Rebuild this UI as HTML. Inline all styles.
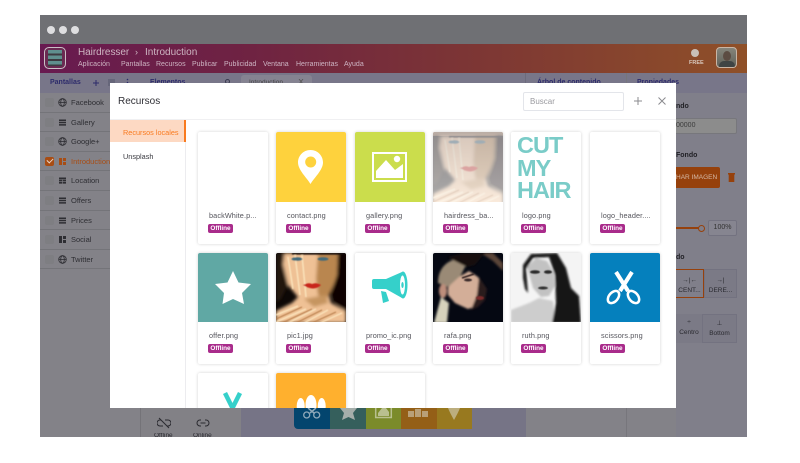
<!DOCTYPE html>
<html><head><meta charset="utf-8"><style>
*{box-sizing:border-box}
html,body{margin:0;padding:0;width:800px;height:463px;overflow:hidden;background:#fff;font-family:"Liberation Sans",sans-serif}
.a{position:absolute}
.row{position:absolute;left:40px;width:71px;height:19.55px;border-bottom:1px solid #747479;font-size:7.5px;color:#2e2e33;line-height:19.5px;white-space:nowrap;overflow:hidden}
.row .cb{position:absolute;left:5px;top:5px;width:9px;height:9px;background:#7e7e82;border-radius:2px}
.row svg{position:absolute;left:18px;top:5px}
.row span{position:absolute;left:31px;top:0}
.card{position:absolute;width:70px;height:112px;background:#fff;border-radius:2px;box-shadow:0 0 3px rgba(0,0,0,.18)}
.img{position:absolute;left:0;top:0;width:70px;height:70px;overflow:hidden;border-radius:2px 2px 0 0}
.img svg{display:block}
.nm{position:absolute;left:11px;top:79px;font-size:7.3px;color:#55555c;white-space:nowrap;letter-spacing:.1px}
.bd{position:absolute;left:10px;top:92px;width:25px;height:9px;background:#a92b8b;color:#fff;font-size:6.4px;font-weight:bold;border-radius:2px;text-align:center;line-height:9px}
.tb{font-size:7px;color:#2d2b6b;font-weight:bold;position:absolute;top:78.5px;white-space:nowrap}
.menu{position:absolute;top:60.5px;font-size:7px;color:#cdb3c2;white-space:nowrap}
</style></head><body>
<svg width="0" height="0" style="position:absolute"><defs>
<filter id="b1"><feGaussianBlur stdDeviation="1.1"/></filter>
<filter id="b3"><feGaussianBlur stdDeviation="1.600"/></filter>
<filter id="b2"><feGaussianBlur stdDeviation=".6"/></filter>
<g id="pic">
<rect width="70" height="70" fill="#0d0806"/>
<g filter="url(#b3)">
<path d="M0 70V58L16 50 22 44 12 32 7 12 8 0H62L61 24 53 42 55 50 70 58V70Z" fill="#efc195"/>
<path d="M42 0H62L61 24 53 42 50 47 42 42 40 26Z" fill="#b98650"/>
<path d="M28 46L50 42 52 50 38 54Z" fill="#c69560"/>
<path d="M7 0V14L12 32 5 46 0 50V0Z" fill="#24140d"/>
<path d="M62 0H70V58L59 50 55 40 61 22Z" fill="#080504"/>
</g>
<g filter="url(#b2)">
<path d="M0 62L22 53M0 69L30 56M12 70L40 56M28 70L52 57M44 70L66 60M12 4L17 36M19 2L24 42M26 2L30 44" stroke="#fae2ba" stroke-width="1.500" fill="none"/>
<path d="M0 66L26 54M6 70L36 56M20 70L46 57M36 70L60 59" stroke="#b67c48" stroke-width="1" fill="none"/>
<path d="M16 0H70V1.500H16Z" fill="#150c08"/>
<ellipse cx="21" cy="6" rx="5.500" ry="1.800" fill="#3f6a7b"/>
<ellipse cx="47" cy="6" rx="5.500" ry="1.800" fill="#426a7a"/>
<path d="M27 32Q33 29 36 31 40 29 45 32 38 39 27 32Z" fill="#c8261f"/>
</g></g>
</defs></svg>

<!-- app window -->
<div class="a" style="left:40px;top:15px;width:707px;height:422px;background:#838288;overflow:hidden"></div>
<div class="a" style="left:40px;top:15px;width:707px;height:29px;background:#6f7074"></div>
<div class="a" style="left:47px;top:26px;width:8px;height:8px;border-radius:50%;background:#dedee0"></div>
<div class="a" style="left:59px;top:26px;width:8px;height:8px;border-radius:50%;background:#dedee0"></div>
<div class="a" style="left:71px;top:26px;width:8px;height:8px;border-radius:50%;background:#dedee0"></div>
<div class="a" style="left:40px;top:44px;width:707px;height:29px;background:linear-gradient(90deg,#681a50 0%,#6f2342 30%,#7c3535 60%,#8f5028 100%)"></div>
<div class="a" style="left:44px;top:47px;width:22px;height:22px;border:1px solid #c9c0c6;border-radius:5px;background:#6a2a52"></div>
<div class="a" style="left:48px;top:50px;width:14px;height:16px;background:repeating-linear-gradient(180deg,#5f8f8e 0,#5f8f8e 3.500px,#3c3a40 3.500px,#3c3a40 5.500px)"></div>
<div class="a" style="left:78px;top:47px;font-size:10px;color:#cdb5c2;white-space:nowrap;letter-spacing:-.05px">Hairdresser</div>
<div class="a" style="left:135px;top:47px;font-size:9px;color:#cdb5c2">›</div>
<div class="a" style="left:145px;top:47px;font-size:10px;color:#cdb5c2;white-space:nowrap">Introduction</div>
<div class="menu" style="left:78px">Aplicación</div>
<div class="menu" style="left:121px">Pantallas</div>
<div class="menu" style="left:156px">Recursos</div>
<div class="menu" style="left:192px">Publicar</div>
<div class="menu" style="left:224px">Publicidad</div>
<div class="menu" style="left:263px">Ventana</div>
<div class="menu" style="left:296px">Herramientas</div>
<div class="menu" style="left:344px">Ayuda</div>
<div class="a" style="left:691px;top:49px;width:8px;height:8px;border-radius:50%;background:#c9c0b8"></div>
<div class="a" style="left:689px;top:60px;font-size:5.500px;color:#d8c8bc;font-weight:bold">FREE</div>
<div class="a" style="left:716px;top:47px;width:21px;height:21px;border:1px solid #c9b5a5;border-radius:4px;background:linear-gradient(180deg,#85847a,#60625a);overflow:hidden"><div style="position:absolute;left:6px;top:3px;width:8px;height:10px;border-radius:50%;background:#5c4c42"></div><div style="position:absolute;left:2px;top:13px;width:16px;height:8px;border-radius:5px 5px 0 0;background:#3f4444"></div></div>

<!-- toolbar -->
<div class="a" style="left:40px;top:73px;width:707px;height:20px;background:#787689"></div>
<div class="tb" style="left:50px">Pantallas</div>
<svg class="a" style="left:92px;top:79px" width="8" height="8" viewBox="0 0 8 8" stroke="#2d2b6b" stroke-width="1"><path d="M4 1V7M1 4H7"/></svg>
<div class="a" style="left:108px;top:79px;width:7px;height:7px;background:#66667a"></div>
<svg class="a" style="left:126px;top:78px" width="3" height="9" viewBox="0 0 3 9" fill="#2d2b6b"><circle cx="1.500" cy="1.500" r=".8"/><circle cx="1.500" cy="4.500" r=".8"/><circle cx="1.500" cy="7.500" r=".8"/></svg>
<div class="tb" style="left:150px">Elementos</div>
<div class="a" style="left:225px;top:79px;width:5px;height:5px;border:1px solid #3a3a50;border-radius:50%"></div>
<div class="a" style="left:241px;top:75px;width:71px;height:18px;background:#858391;border-radius:3px 3px 0 0"></div>
<div class="a" style="left:249px;top:79px;font-size:6.500px;color:#444">Introduction</div>
<svg class="a" style="left:298px;top:79px" width="6" height="5" viewBox="0 0 6 5" stroke="#555" stroke-width=".8"><path d="M1 0L5 5M5 0L1 5"/></svg>
<div class="tb" style="left:537px">Árbol de contenido</div>
<div class="tb" style="left:637px">Propiedades</div>
<div class="a" style="left:525px;top:73px;width:1px;height:20px;background:#6d6b7c"></div>
<div class="a" style="left:626px;top:73px;width:1px;height:364px;background:#77767c"></div>

<!-- sidebar -->
<div class="row" style="top:93.200px"><div class="cb"></div><svg width="9" height="9" viewBox="0 0 9 9" fill="none" stroke="#2e2e33" stroke-width=".8"><circle cx="4.500" cy="4.500" r="3.800"/><ellipse cx="4.500" cy="4.500" rx="1.800" ry="3.800"/><path d="M.7 4.500H8.300"/></svg><span>Facebook</span></div>
<div class="row" style="top:112.800px"><div class="cb"></div><svg width="9" height="9" viewBox="0 0 9 9" fill="#2e2e33"><path d="M1 1.500H8V3H1ZM1 3.800H8V5.300H1ZM1 6.100H8V7.600H1Z"/></svg><span>Gallery</span></div>
<div class="row" style="top:132.300px"><div class="cb"></div><svg width="9" height="9" viewBox="0 0 9 9" fill="none" stroke="#2e2e33" stroke-width=".8"><circle cx="4.500" cy="4.500" r="3.800"/><ellipse cx="4.500" cy="4.500" rx="1.800" ry="3.800"/><path d="M.7 4.500H8.300"/></svg><span>Google+</span></div>
<div class="row" style="top:151.900px;color:#a84d14"><div class="cb" style="background:#a84d14"></div><svg width="9" height="9" viewBox="0 0 9 9" fill="#a84d14"><path d="M1 1H4V8H1ZM5 1H8V4H5ZM5 5H8V8H5Z"/></svg><span>Introduction</span></div>
<div class="a" style="left:46.500px;top:158px;width:6px;height:4px;border-left:1px solid #e8d5c8;border-bottom:1px solid #e8d5c8;transform:rotate(-45deg)"></div>
<div class="row" style="top:171.400px"><div class="cb"></div><svg width="9" height="9" viewBox="0 0 9 9" fill="#2e2e33"><path d="M1 1.500H8V3.200H1ZM1 3.800H4.200V5.300H1ZM4.800 3.800H8V5.300H4.800ZM1 5.900H4.200V7.600H1ZM4.800 5.900H8V7.600H4.800Z"/></svg><span>Location</span></div>
<div class="row" style="top:191px"><div class="cb"></div><svg width="9" height="9" viewBox="0 0 9 9" fill="#2e2e33"><path d="M1 1.500H8V3H1ZM1 3.800H8V5.300H1ZM1 6.100H8V7.600H1Z"/></svg><span>Offers</span></div>
<div class="row" style="top:210.500px"><div class="cb"></div><svg width="9" height="9" viewBox="0 0 9 9" fill="#2e2e33"><path d="M1 1.500H8V3H1ZM1 3.800H8V5.300H1ZM1 6.100H8V7.600H1Z"/></svg><span>Prices</span></div>
<div class="row" style="top:230.100px"><div class="cb"></div><svg width="9" height="9" viewBox="0 0 9 9" fill="#2e2e33"><path d="M1 1H4V8H1ZM5 1H8V4H5ZM5 5H8V8H5Z"/></svg><span>Social</span></div>
<div class="row" style="top:249.600px"><div class="cb"></div><svg width="9" height="9" viewBox="0 0 9 9" fill="none" stroke="#2e2e33" stroke-width=".8"><circle cx="4.500" cy="4.500" r="3.800"/><ellipse cx="4.500" cy="4.500" rx="1.800" ry="3.800"/><path d="M.7 4.500H8.300"/></svg><span>Twitter</span></div>

<!-- bottom bits -->
<div class="a" style="left:140px;top:408px;width:101px;height:29px;background:#828186;border-left:1px solid #747378"></div>
<div class="a" style="left:241px;top:408px;width:285px;height:29px;background:#767486"></div>
<svg class="a" style="left:157px;top:417px" width="14" height="12" viewBox="0 0 14 12" fill="none" stroke="#2a2a30" stroke-width="1"><path d="M4 3H3A3 3 0 0 0 3 9H6M8 3H11A3 3 0 0 1 11 9H10M2 1L12 11"/></svg>
<svg class="a" style="left:196px;top:417px" width="14" height="12" viewBox="0 0 14 12" fill="none" stroke="#2a2a30" stroke-width="1"><path d="M5 3H4A3 3 0 0 0 4 9H5M9 3H10A3 3 0 0 1 10 9H9M4.500 6H9.500"/></svg>
<div class="a" style="left:154px;top:433px;font-size:6.500px;color:#2a2a30;height:4px;overflow:hidden;line-height:6px">Offline</div>
<div class="a" style="left:193px;top:433px;font-size:6.500px;color:#2a2a30;height:4px;overflow:hidden;line-height:6px">Online</div>
<div class="a" style="left:294px;top:408px;width:36px;height:20.500px;background:#03456e;border-radius:0 0 0 4px"></div>
<div class="a" style="left:330px;top:408px;width:36px;height:20.500px;background:#355f5c"></div>
<div class="a" style="left:366px;top:408px;width:35px;height:20.500px;background:#7b8b2a"></div>
<div class="a" style="left:401px;top:408px;width:36px;height:20.500px;background:#945f17"></div>
<div class="a" style="left:437px;top:408px;width:35px;height:20.500px;background:#98791f"></div>
<svg class="a" style="left:294px;top:408px" width="178" height="21" viewBox="0 0 178 21"><path d="M14 0L20 5M22 0L16 5" stroke="#8fa9ba" stroke-width="1.500" fill="none"/><circle cx="12.700" cy="7" r="3" fill="none" stroke="#8fa9ba" stroke-width="1.300"/><circle cx="22.700" cy="7" r="3" fill="none" stroke="#8fa9ba" stroke-width="1.300"/><path d="M46 0H63L59 5 61 12 54.500 9 48 12 50 5Z" fill="#a5aeaa"/><path d="M81.700 0V9.500H97.300V0" fill="none" stroke="#b9c08f" stroke-width="1.500"/><path d="M84 8V5L88 0H92L95 4V8Z" fill="#b9c08f"/><path d="M114 9V3H120V9ZM121 9V1H127V9ZM128 9V3H134V9Z" fill="#b9a078"/><path d="M154 0H166Q164 5 160 12 156 5 154 0Z" fill="#bcae7e"/></svg>

<!-- right panel (dimmed) -->
<div class="a" style="left:676px;top:93px;width:71px;height:344px;background:#807f8a"></div>
<div class="a" style="left:676px;top:103px;font-size:7px;font-weight:bold;color:#1f1f24">ndo</div>
<div class="a" style="left:676px;top:118px;width:61px;height:16px;background:#8c8c8c;border:1px solid #77777c;border-left:0;border-radius:0 2px 2px 0;font-size:7px;color:#3c3c3c;line-height:14px">00000</div>
<div class="a" style="left:676px;top:152px;font-size:7px;font-weight:bold;color:#1f1f24">Fondo</div>
<div class="a" style="left:676px;top:167px;width:44px;height:21px;background:#96410c;border-radius:0 2px 2px 0;color:#d5b9a6;font-size:6.500px;line-height:21px;white-space:nowrap;overflow:hidden">HAR IMAGEN</div>
<svg class="a" style="left:728px;top:173px" width="7" height="9" viewBox="0 0 7 9" fill="#96410c"><path d="M0 0H7V1.500H6.300V9H.7V1.500H0Z"/></svg>
<div class="a" style="left:676px;top:227px;width:25px;height:2px;background:#96410c"></div>
<div class="a" style="left:698px;top:225px;width:7px;height:7px;border:1px solid #96410c;border-radius:50%;background:#807f8a"></div>
<div class="a" style="left:708px;top:220px;width:29px;height:16px;background:#868590;border:1px solid #737280;border-radius:2px;font-size:7px;color:#333;text-align:center;line-height:14px">100%</div>
<div class="a" style="left:676px;top:254px;font-size:7px;font-weight:bold;color:#1f1f24">do</div>
<div class="a" style="left:676px;top:269px;width:28px;height:29px;border:1px solid #96410c;border-left:0;font-size:6.500px;color:#2a2a30;text-align:center;line-height:10px;padding-top:6px;white-space:nowrap;overflow:hidden">→|←<br>CENT...</div>
<div class="a" style="left:704px;top:269px;width:33px;height:29px;background:#7b7a86;border:1px solid #737280;font-size:6.500px;color:#2a2a30;text-align:center;line-height:10px;padding-top:6px">→|<br>DERE...</div>
<div class="a" style="left:676px;top:314px;width:26px;height:29px;background:#7b7a86;font-size:6.500px;color:#2a2a30;text-align:center;line-height:10px;padding-top:4px">÷<br>Centro</div>
<div class="a" style="left:702px;top:314px;width:35px;height:29px;background:#7b7a86;border:1px solid #737280;font-size:6.500px;color:#2a2a30;text-align:center;line-height:10px;padding-top:4px">⊥<br>Bottom</div>

<!-- modal -->
<div class="a" style="left:110px;top:83px;width:566px;height:325px;background:#fff;overflow:hidden">
 <div class="a" style="left:8px;top:12.500px;font-size:10px;line-height:12px;color:#303036">Recursos</div>
 <div class="a" style="left:413px;top:9px;width:101px;height:19px;border:1px solid #e3e5ea;border-radius:2px;font-size:8px;color:#9a9a9f;line-height:17px;padding-left:6px">Buscar</div>
 <svg class="a" style="left:523px;top:13px" width="10" height="10" viewBox="0 0 10 10" stroke="#8b8b8f" stroke-width="1"><path d="M5 1V9M1 5H9"/></svg>
 <svg class="a" style="left:547px;top:13px" width="10" height="10" viewBox="0 0 10 10" stroke="#8b8b8f" stroke-width="1"><path d="M1.500 1.500L8.500 8.500M8.500 1.500L1.500 8.500"/></svg>
 <div class="a" style="left:0;top:36px;width:566px;height:1px;background:#f0f0f2"></div>
 <div class="a" style="left:75px;top:37px;width:1px;height:288px;background:#ececef"></div>
 <div class="a" style="left:0;top:37px;width:76px;height:22px;background:#fdd9c3;border-right:2px solid #f97a1f"></div>
 <div class="a" style="left:13px;top:45px;font-size:7.300px;color:#f97a1f;white-space:nowrap">Recursos locales</div>
 <div class="a" style="left:13px;top:69px;font-size:7.300px;color:#3a3a40">Unsplash</div>

 <div class="card" style="left:88px;top:49px"><div class="nm">backWhite.p...</div><div class="bd">Offline</div></div>

 <div class="card" style="left:166px;top:49px"><div class="img" style="background:#fed23d"><svg width="70" height="70" viewBox="0 0 70 70"><path fill-rule="evenodd" d="M34.500 18C27 18 22 24 22 30.500 22 38 31 46 34.500 52 38 46 47 38 47 30.500 47 24 42 18 34.500 18ZM34.700 24.500A5.500 5.500 0 1 1 34.700 35.500 5.500 5.500 0 0 1 34.700 24.500Z" fill="#fff"/></svg></div><div class="nm">contact.png</div><div class="bd">Offline</div></div>

 <div class="card" style="left:245px;top:49px"><div class="img" style="background:#cbdd4c"><svg width="70" height="70" viewBox="0 0 70 70"><rect x="18" y="21" width="33" height="28" fill="none" stroke="#fff" stroke-width="2"/><circle cx="42" cy="27" r="3.200" fill="#fff"/><path d="M21 46V39L31 28 40 38 48 32V46Z" fill="#fff"/></svg></div><div class="nm">gallery.png</div><div class="bd">Offline</div></div>

 <div class="card" style="left:323px;top:49px"><div class="img"><svg width="70" height="70" viewBox="0 0 70 70"><defs><linearGradient id="fd" x1="0" y1="0" x2="0" y2="1"><stop offset="0" stop-color="#c9c8cc"/><stop offset="1" stop-color="#fff"/></linearGradient></defs><rect width="70" height="70" fill="#a07a5a"/><use href="#pic" y="4"/><rect width="70" height="70" fill="url(#fd)" opacity=".66"/></svg></div><div class="nm">hairdress_ba...</div><div class="bd">Offline</div></div>

 <div class="card" style="left:401px;top:49px"><div class="img" style="background:#fff"><div style="position:absolute;left:6px;top:2.400px;font-size:23.500px;line-height:22.500px;font-weight:bold;color:#7accc8;letter-spacing:-1px;white-space:nowrap">CUT<br>MY<br>HAIR</div></div><div class="nm">logo.png</div><div class="bd">Offline</div></div>

 <div class="card" style="left:480px;top:49px"><div class="nm">logo_header....</div><div class="bd">Offline</div></div>

 <div class="card" style="left:88px;top:170px;height:111px"><div class="img" style="background:#60a8a4;height:69px"><svg width="70" height="70" viewBox="0 0 70 70"><path d="M35 18L40.500 29.500 53 31 44 40 46 51 35 46 24.500 51 26 40 17 31 29.500 29.500Z" fill="#fff"/></svg></div><div class="nm" style="top:78px">offer.png</div><div class="bd" style="top:91px">Offline</div></div>

 <div class="card" style="left:166px;top:170px;height:111px"><div class="img" style="height:69px"><svg width="70" height="70" viewBox="0 0 70 70"><use href="#pic"/></svg></div><div class="nm" style="top:78px">pic1.jpg</div><div class="bd" style="top:91px">Offline</div></div>

 <div class="card" style="left:245px;top:170px;height:111px"><div class="img" style="height:69px;background:#fff"><svg width="70" height="70" viewBox="0 0 70 70" fill="#35d0ca"><path d="M19 26H31V36H19Q17 36 17 34V28Q17 26 19 26Z"/><path d="M31 26L47 19V45L31 36Z"/><ellipse cx="48" cy="32" rx="4.500" ry="13.500"/><ellipse cx="47.500" cy="32" rx="2.500" ry="9.500" fill="#fff"/><ellipse cx="47.500" cy="32" rx="1.200" ry="3"/><path d="M26 38L31 39 34 48 28 50Z"/></svg></div><div class="nm" style="top:78px">promo_ic.png</div><div class="bd" style="top:91px">Offline</div></div>

 <div class="card" style="left:323px;top:170px;height:111px"><div class="img" style="height:69px"><svg width="70" height="70" viewBox="0 0 70 70"><rect width="70" height="70" fill="#050812"/><g filter="url(#b1)"><path d="M48 0H60L70 10V18L60 8Z" fill="#5a4438"/><path d="M8 44L16 50 14 70H1Z" fill="#d6d2bc"/><path d="M5 30C5 16 13 8 24 6L34 10 25 28 14 34Z" fill="#9a8a76"/><path d="M15 34L26 24 36 18 45 24 50 36 50 45 46 52 35 56 22 50 15 42Z" fill="#d3ae98"/><ellipse cx="10" cy="38" rx="4" ry="7" fill="#bd8e7c"/><path d="M46 24L54 36 52 47 45 54 38 57 44 42Z" fill="#2a1b1e"/><path d="M14 4L32 0H52L42 12 34 14Z" fill="#16100f"/></g><g filter="url(#b2)"><path d="M29 25L41 21" stroke="#2a1d1d" stroke-width="1.500"/><ellipse cx="35" cy="27" rx="4" ry="1.500" fill="#3a2a2a"/><ellipse cx="47" cy="45" rx="4" ry="2" fill="#7a2b2a"/></g></svg></div><div class="nm" style="top:78px">rafa.png</div><div class="bd" style="top:91px">Offline</div></div>

 <div class="card" style="left:401px;top:170px;height:111px"><div class="img" style="height:69px"><svg width="70" height="70" viewBox="0 0 70 70"><rect width="70" height="70" fill="#f4f4f4"/><g filter="url(#b1)"><path d="M0 70V57L18 50 28 45 42 48 45 70Z" fill="#cdcdcd"/><path d="M16 14L25 5 36 8 43 20 44 33 38 43 30 44 22 35Z" fill="#c2c2c2"/><path d="M12 12L20 1 46 0 55 15 60 35 68 43 70 70H41L45 50 44 22 38 4 22 5 15 16 17 40 14 36 12 25Z" fill="#151515"/></g><g filter="url(#b2)"><ellipse cx="24" cy="19" rx="5" ry="1.800" fill="#2a2a2a"/><ellipse cx="37" cy="19" rx="4" ry="1.800" fill="#2a2a2a"/><ellipse cx="32" cy="35" rx="5" ry="1.500" fill="#333"/></g></svg></div><div class="nm" style="top:78px">ruth.png</div><div class="bd" style="top:91px">Offline</div></div>

 <div class="card" style="left:480px;top:170px;height:111px"><div class="img" style="height:69px;background:#0580bd"><svg width="70" height="70" viewBox="0 0 70 70" fill="none" stroke="#fff"><path d="M26 19L38 38M42 19L30 38" stroke-width="4"/><ellipse cx="23.500" cy="44" rx="7" ry="4.500" transform="rotate(-50 23.500 44)" stroke-width="2.500"/><ellipse cx="43.500" cy="44" rx="7" ry="4.500" transform="rotate(50 43.500 44)" stroke-width="2.500"/></svg></div><div class="nm" style="top:78px">scissors.png</div><div class="bd" style="top:91px">Offline</div></div>

 <div class="card" style="left:88px;top:290px"><svg width="70" height="40" viewBox="0 0 70 40" fill="none" stroke="#35d0ca" stroke-width="4.500"><path d="M27 20L35 36M42 20L34 36"/></svg></div>
 <div class="card" style="left:166px;top:290px"><div class="img" style="background:#ffb02e"><svg width="70" height="70" viewBox="0 0 70 70" fill="#fff"><ellipse cx="35" cy="32" rx="5.500" ry="10"/><ellipse cx="24.700" cy="33" rx="4" ry="8"/><ellipse cx="45.700" cy="33" rx="4" ry="8"/></svg></div></div>
 <div class="card" style="left:245px;top:290px"></div>
</div>
</body></html>
